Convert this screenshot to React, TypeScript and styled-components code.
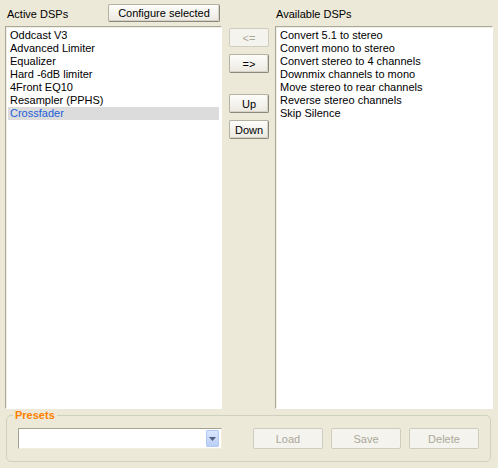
import React from "react";
import styled, { createGlobalStyle } from "styled-components";

const GlobalStyle = createGlobalStyle`
  html, body {
    margin: 0;
    padding: 0;
    background: #ece9d8;
  }
  body {
    font-family: "Liberation Sans", Arial, sans-serif;
    font-size: 11px;
    color: #000;
  }
`;

const Window = styled.div`
  width: 498px;
  height: 468px;
  background: #ece9d8;
  box-sizing: border-box;
  padding: 0 5px 0 5px;
  display: flex;
  flex-direction: column;
`;

const Main = styled.div`
  display: grid;
  grid-template-columns: 217px 53px 218px;
  grid-template-rows: 26px 383px;
`;

const Header = styled.div<{ $indent?: number }>`
  display: flex;
  align-items: center;
  justify-content: space-between;
  padding-left: ${({ $indent }) => $indent ?? 0}px;
  padding-right: 2px;
`;

const Label = styled.span`
  padding-top: 2px;
`;

const Button = styled.button<{ $w?: number; $h?: number }>`
  font-family: "Liberation Sans", Arial, sans-serif;
  font-size: 11px;
  width: ${({ $w }) => ($w ? `${$w}px` : "auto")};
  height: ${({ $h }) => $h ?? 19}px;
  padding: 0 8px;
  box-sizing: border-box;
  color: #000;
  background: linear-gradient(#fdfdfb, #ebe9e0);
  border: 1px solid;
  border-color: #b5b2a4 #8a887c #8a887c #b5b2a4;
  border-radius: 2px;
  box-shadow: inset -1px -1px 0 #d6d3c6;
  display: flex;
  align-items: center;
  justify-content: center;
  &:disabled {
    color: #aca899;
    background: #f4f3ee;
    border-color: #cfcdc0;
    box-shadow: none;
  }
`;

const List = styled.div`
  background: #fff;
  border: 1px solid;
  border-color: #aca899 #fff #fff #aca899;
  box-shadow: inset 1px 1px 0 #f1efe2;
  padding: 2px 2px 0 2px;
  overflow: hidden;
`;

const Item = styled.div<{ $selected?: boolean }>`
  height: 13px;
  line-height: 13px;
  padding-left: 2px;
  white-space: nowrap;
  background: ${({ $selected }) => ($selected ? "#dcdcdc" : "transparent")};
  color: ${({ $selected }) => ($selected ? "#1c5fd8" : "#000")};
`;

const ButtonColumn = styled.div`
  display: flex;
  flex-direction: column;
  padding: 2px 0 0 7px;
  gap: 7px;
`;

const Spacer = styled.div`
  height: 7px;
`;

const Group = styled.fieldset`
  margin: 1px 2px 0 1px;
  padding: 7px 11px 8px 11px;
  border: 1px solid #d0d0bf;
  border-radius: 5px;
  display: flex;
  align-items: center;
  height: 52px;
  box-sizing: border-box;
  min-width: 0;
`;

const Legend = styled.legend`
  color: #ff8000;
  font-weight: bold;
  font-size: 11px;
  padding: 0 2px;
  margin-left: -5px;
  line-height: 11px;
`;

const Combo = styled.div`
  width: 204px;
  height: 21px;
  box-sizing: border-box;
  background: #fff;
  border: 1px solid;
  border-color: #a5a294 #f1efe2 #f1efe2 #a5a294;
  display: flex;
  justify-content: flex-end;
  align-items: center;
  padding-right: 2px;
`;

const DropButton = styled.div`
  width: 13px;
  height: 17px;
  box-sizing: border-box;
  border: 1px solid #b4c8f4;
  border-radius: 1px;
  background: linear-gradient(#dbe6fd, #b9cdf6);
  display: flex;
  align-items: center;
  justify-content: center;
`;

const PresetButtons = styled.div`
  display: flex;
  gap: 8px;
  margin-left: 31px;
`;

const active = [
  "Oddcast V3",
  "Advanced Limiter",
  "Equalizer",
  "Hard -6dB limiter",
  "4Front EQ10",
  "Resampler (PPHS)",
  "Crossfader",
];

const available = [
  "Convert 5.1 to stereo",
  "Convert mono to stereo",
  "Convert stereo to 4 channels",
  "Downmix channels to mono",
  "Move stereo to rear channels",
  "Reverse stereo channels",
  "Skip Silence",
];

const App = () => {
  return (
    <>
      <GlobalStyle />
      <Window>
        <Main>
          <Header $indent={2}>
            <Label>Active DSPs</Label>
            <Button $w={112} $h={18}>
              Configure selected
            </Button>
          </Header>
          <div />
          <Header $indent={1}>
            <Label>Available DSPs</Label>
          </Header>
          <List>
            {active.map((name) => (
              <Item key={name} $selected={name === "Crossfader"}>
                {name}
              </Item>
            ))}
          </List>
          <ButtonColumn>
            <Button $w={40} disabled>
              &lt;=
            </Button>
            <Button $w={40}>=&gt;</Button>
            <Spacer />
            <Button $w={40}>Up</Button>
            <Button $w={40}>Down</Button>
          </ButtonColumn>
          <List>
            {available.map((name) => (
              <Item key={name}>{name}</Item>
            ))}
          </List>
        </Main>
        <Group>
          <Legend>Presets</Legend>
          <Combo>
            <DropButton>
              <svg width="7" height="4" viewBox="0 0 7 4">
                <path d="M0 0h7L3.5 4z" fill="#4d6185" />
              </svg>
            </DropButton>
          </Combo>
          <PresetButtons>
            <Button $w={70} $h={21} disabled>
              Load
            </Button>
            <Button $w={70} $h={21} disabled>
              Save
            </Button>
            <Button $w={70} $h={21} disabled>
              Delete
            </Button>
          </PresetButtons>
        </Group>
      </Window>
    </>
  );
};

export default App;
